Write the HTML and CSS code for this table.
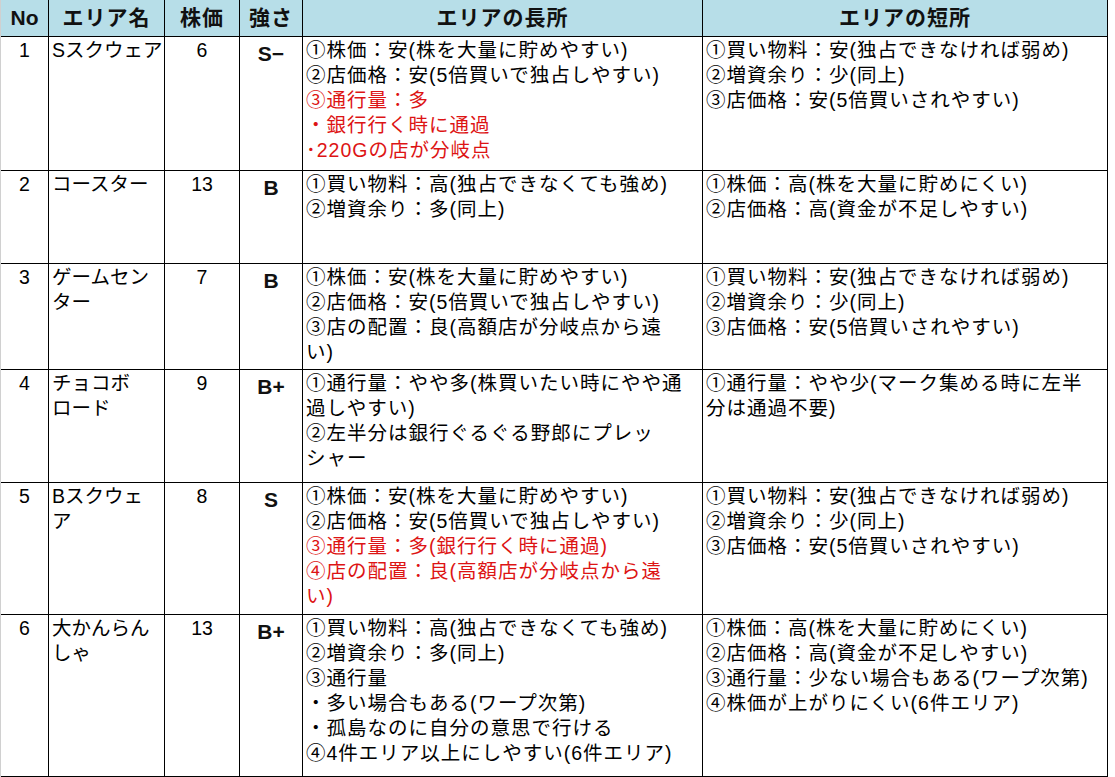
FILE: index.html
```html
<!DOCTYPE html>
<html lang="ja">
<head>
<meta charset="utf-8">
<title>エリア比較表</title>
<link rel="stylesheet" href="styles.css">
</head>
<body>
<table class="areas">
  <colgroup>
    <col class="c-no">
    <col class="c-name">
    <col class="c-price">
    <col class="c-rank">
    <col class="c-pro">
    <col class="c-con">
  </colgroup>
  <thead>
    <tr class="head">
      <th class="no">No</th>
      <th>エリア名</th>
      <th>株価</th>
      <th>強さ</th>
      <th>エリアの長所</th>
      <th>エリアの短所</th>
    </tr>
  </thead>
  <tbody>
    <tr class="r1">
      <td class="num">1</td>
      <td class="name">Sスクウェア</td>
      <td class="num">6</td>
      <td class="rank">S−</td>
      <td class="txt">①株価：安(株を大量に貯めやすい)<br>②店価格：安(5倍買いで独占しやすい)<br><span class="red">③通行量：多<br>・銀行行く時に通過<br>･220Gの店が分岐点</span></td>
      <td class="txt">①買い物料：安(独占できなければ弱め)<br>②増資余り：少(同上)<br>③店価格：安(5倍買いされやすい)</td>
    </tr>
    <tr class="r2">
      <td class="num">2</td>
      <td class="name">コースター</td>
      <td class="num">13</td>
      <td class="rank">B</td>
      <td class="txt">①買い物料：高(独占できなくても強め)<br>②増資余り：多(同上)</td>
      <td class="txt">①株価：高(株を大量に貯めにくい)<br>②店価格：高(資金が不足しやすい)</td>
    </tr>
    <tr class="r3">
      <td class="num">3</td>
      <td class="name">ゲームセン<br>ター</td>
      <td class="num">7</td>
      <td class="rank">B</td>
      <td class="txt">①株価：安(株を大量に貯めやすい)<br>②店価格：安(5倍買いで独占しやすい)<br>③店の配置：良(高額店が分岐点から遠<br>い)</td>
      <td class="txt">①買い物料：安(独占できなければ弱め)<br>②増資余り：少(同上)<br>③店価格：安(5倍買いされやすい)</td>
    </tr>
    <tr class="r4">
      <td class="num">4</td>
      <td class="name">チョコボ<br>ロード</td>
      <td class="num">9</td>
      <td class="rank">B+</td>
      <td class="txt">①通行量：やや多(株買いたい時にやや通<br>過しやすい)<br>②左半分は銀行ぐるぐる野郎にプレッ<br>シャー</td>
      <td class="txt">①通行量：やや少(マーク集める時に左半<br>分は通過不要)</td>
    </tr>
    <tr class="r5">
      <td class="num">5</td>
      <td class="name">Bスクウェ<br>ア</td>
      <td class="num">8</td>
      <td class="rank">S</td>
      <td class="txt">①株価：安(株を大量に貯めやすい)<br>②店価格：安(5倍買いで独占しやすい)<br><span class="red">③通行量：多(銀行行く時に通過)<br>④店の配置：良(高額店が分岐点から遠<br>い)</span></td>
      <td class="txt">①買い物料：安(独占できなければ弱め)<br>②増資余り：少(同上)<br>③店価格：安(5倍買いされやすい)</td>
    </tr>
    <tr class="r6">
      <td class="num">6</td>
      <td class="name">大かんらん<br>しゃ</td>
      <td class="num">13</td>
      <td class="rank">B+</td>
      <td class="txt">①買い物料：高(独占できなくても強め)<br>②増資余り：多(同上)<br>③通行量<br>・多い場合もある(ワープ次第)<br>・孤島なのに自分の意思で行ける<br>④4件エリア以上にしやすい(6件エリア)</td>
      <td class="txt">①株価：高(株を大量に貯めにくい)<br>②店価格：高(資金が不足しやすい)<br>③通行量：少ない場合もある(ワープ次第)<br>④株価が上がりにくい(6件エリア)</td>
    </tr>
  </tbody>
</table>
</body>
</html>
```

FILE: styles.css
```css
html, body {
  margin: 0;
  padding: 0;
  background: #ffffff;
}

body {
  font-family: "Liberation Sans", "Noto Sans CJK JP", sans-serif;
  color: #000000;
}

.areas {
  table-layout: fixed;
  border-collapse: separate;
  border-spacing: 0;
  width: 1108px;
  border-left: 1px solid #d0d0d0;
}

.c-no { width: 48px; }
.c-name { width: 116px; }
.c-price { width: 75px; }
.c-rank { width: 63px; }
.c-pro { width: 400px; }
.c-con { width: 405px; }

.areas th,
.areas td {
  box-sizing: border-box;
  border-right: 1px solid #000000;
  border-bottom: 1px solid #000000;
  overflow: hidden;
  white-space: nowrap;
}

.areas th {
  background: #b7dee8;
  height: 37px;
  padding: 0;
  font-family: "Liberation Sans", "Noto Sans CJK JP", sans-serif;
  font-weight: bold;
  font-size: 21px;
  letter-spacing: 1px;
  text-align: center;
  vertical-align: middle;
  line-height: 24px;
  color: #111111;
}

.areas th.no {
  font-size: 21px;
  letter-spacing: 0;
}

.areas td {
  vertical-align: top;
  padding: 1px 0 0 3px;
  font-size: 19.5px;
  line-height: 25px;
}

.areas td.txt {
  letter-spacing: 1px;
}

.areas td.num {
  text-align: center;
  padding-left: 0;
}

.areas td.rank {
  text-align: center;
  padding: 4px 0 0 0;
  font-weight: bold;
  font-size: 21px;
  color: #111111;
}

.red {
  color: #dd1414;
}

.r1 td { height: 134px; }
.r2 td { height: 93px; }
.r3 td { height: 106px; }
.r4 td { height: 113px; }
.r5 td { height: 132px; }
.r6 td { height: 162px; }
```
